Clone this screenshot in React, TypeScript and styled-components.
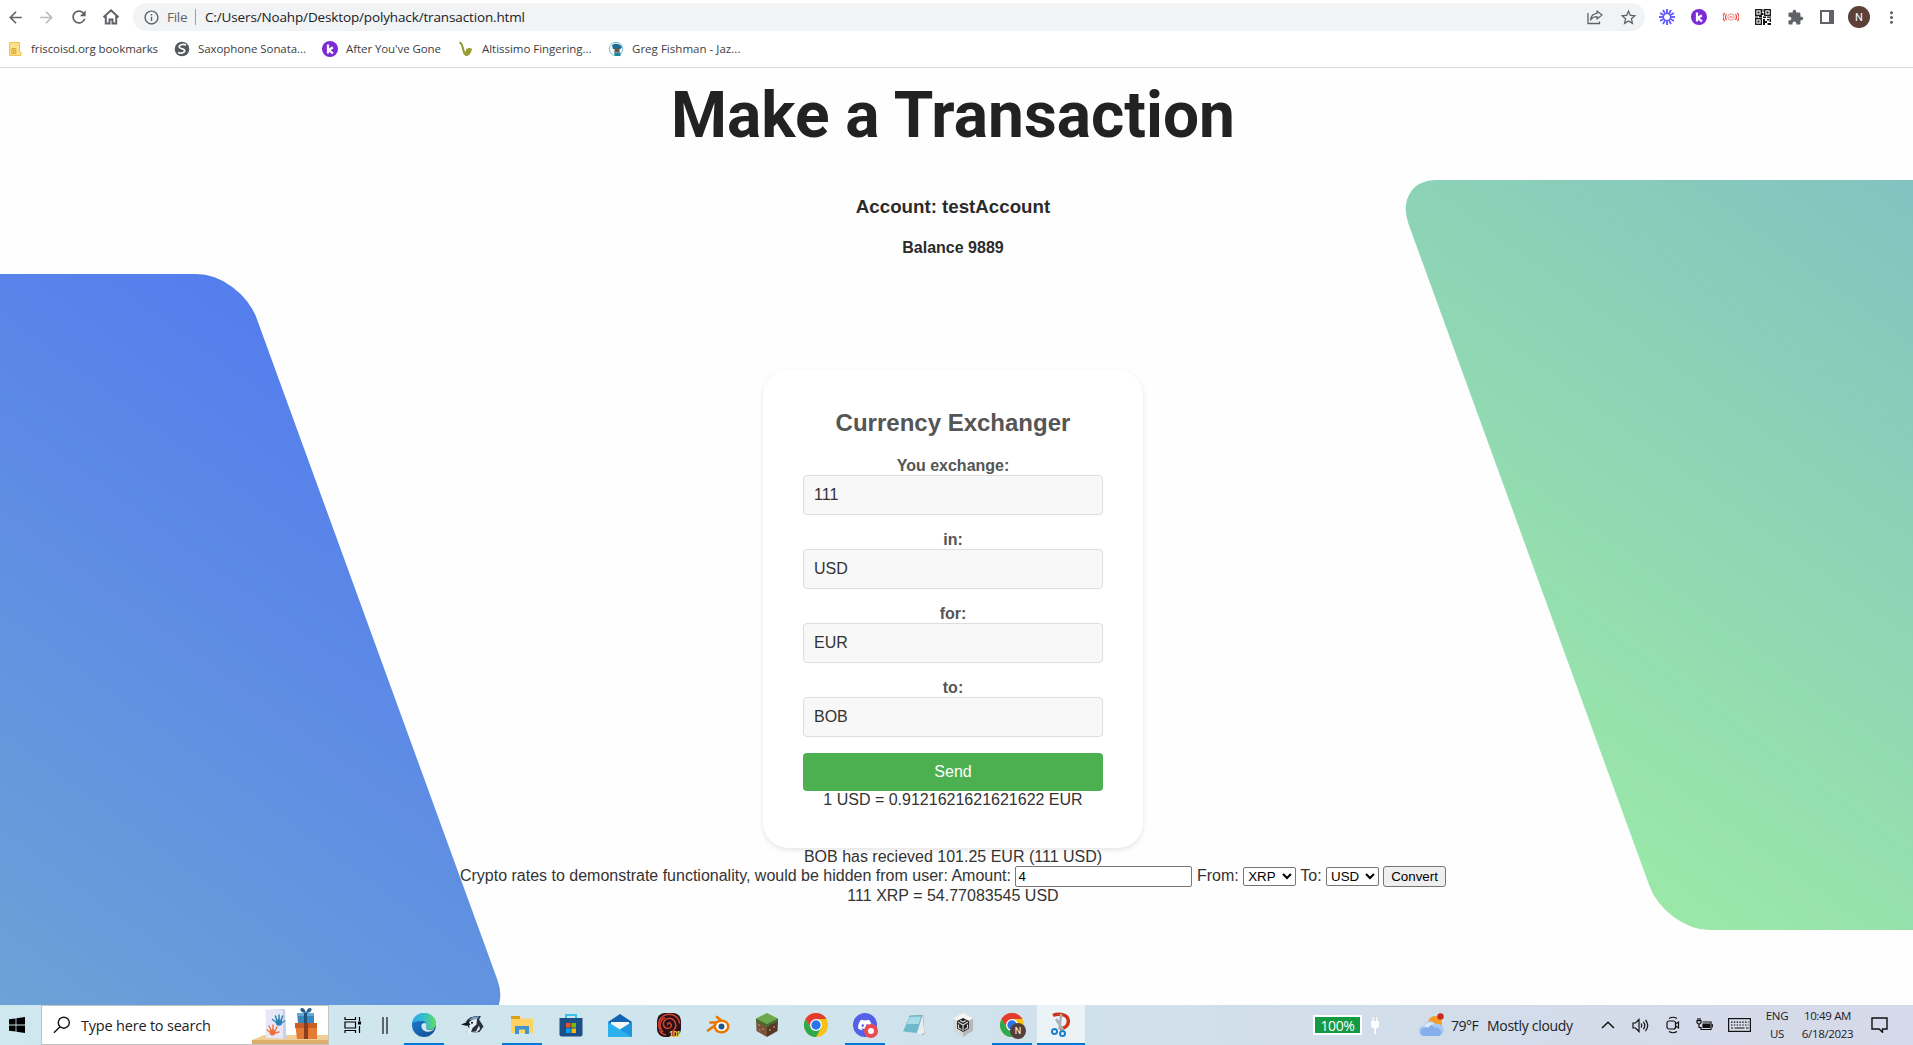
import React from 'react';
import styled, { createGlobalStyle } from 'styled-components';
import { MdArrowBack, MdArrowForward, MdRefresh, MdStarBorder, MdExtension, MdInfoOutline, MdMoreVert } from 'react-icons/md';
import { FaDiscord } from 'react-icons/fa';

const GlobalStyle = createGlobalStyle`
  * { box-sizing: border-box; }
  body { margin: 0; background: #fff; overflow: hidden; }
`;

const uiFont = '"Open Sans", "Noto Sans", sans-serif';
const pageFont = '"Liberation Sans", Arial, sans-serif';

const Screen = styled.div`
  display: flex;
  flex-direction: column;
  width: 1913px;
  height: 1045px;
  overflow: hidden;
  background: #fff;
`;

const BrowserBar = styled.header`
  flex: none;
  height: 68px;
  border-bottom: 1px solid #dadcde;
  font-family: ${uiFont};
`;

const Toolbar = styled.div`
  display: flex;
  align-items: center;
  height: 34px;
`;

const Slot = styled.span<{ $w: number; $color?: string }>`
  flex: none;
  width: ${p => p.$w}px;
  display: flex;
  align-items: center;
  justify-content: center;
  color: ${p => p.$color || '#5f6368'};
  svg { display: block; flex: none; }
`;

const AddressBar = styled.div`
  flex: none;
  display: flex;
  align-items: center;
  width: 1512px;
  height: 28px;
  margin-left: 6px;
  margin-right: 6px;
  border-radius: 14px;
  background: #f1f3f4;
  padding-left: 9px;
`;

const UiText = styled.span<{ $size: number; $w?: number; $ls?: number; $color?: string }>`
  flex: none;
  width: ${p => (p.$w ? p.$w + 'px' : 'auto')};
  font-family: ${uiFont};
  font-size: ${p => p.$size}px;
  letter-spacing: ${p => p.$ls || 0}px;
  color: ${p => p.$color || '#202124'};
  white-space: nowrap;
  line-height: 18px;
`;

const TaskText = styled(UiText)`
  padding-top: 2px;
`;

const Divider = styled.span`
  width: 1px;
  height: 16px;
  margin: 0 9px 0 7px;
  background: #9aa0a6;
`;

const Spacer = styled.span`
  flex: 1;
`;

const Avatar = styled.span`
  display: flex;
  align-items: center;
  justify-content: center;
  width: 22px;
  height: 22px;
  border-radius: 50%;
  background: #5d4037;
  color: #fff;
  font: 11px Roboto, sans-serif;
`;

const Bookmarks = styled.nav`
  display: flex;
  align-items: center;
  height: 30px;
  padding-left: 7px;
`;

const Bookmark = styled.span<{ $w: number }>`
  flex: none;
  display: flex;
  align-items: center;
  gap: 8px;
  width: ${p => p.$w}px;
`;

const Page = styled.main`
  position: relative;
  flex: none;
  height: 937px;
  overflow: hidden;
  padding-right: 7px;
  background: #fefefe;
  color: #333;
  font-family: ${pageFont};
  font-size: 16px;
  line-height: 18px;
  text-align: center;
`;

const Slab = styled.div<{ $left: number; $top: number }>`
  position: absolute;
  z-index: 0;
  left: ${p => p.$left}px;
  top: ${p => p.$top}px;
  width: 2870px;
  height: 750px;
  border-radius: 44px;
  transform: skewX(20deg);
  background: linear-gradient(45deg, #9be9a8, #547dee);
`;

const Content = styled.div`
  position: relative;
  z-index: 1;
  display: flex;
  flex-direction: column;
  align-items: center;
`;

const Title = styled.h1`
  margin: 10px 0 0;
  height: 75px;
  font: 700 64px/75px Roboto, sans-serif;
  color: #222;
`;

const Account = styled.h3`
  margin: 43px 0 0;
  font-size: 18.72px;
  line-height: 22px;
  color: #2b2b2b;
`;

const Balance = styled.h4`
  margin: 21px 0 0;
  font-size: 16px;
  line-height: 18px;
  color: #2b2b2b;
`;

const Card = styled.section`
  display: flex;
  flex-direction: column;
  width: 380px;
  height: 478px;
  margin-top: 113px;
  padding: 40px 40px 39px;
  border-radius: 25px;
  background: #fff;
  box-shadow: 0 2px 5px rgba(0, 0, 0, 0.1);
`;

const CardTitle = styled.h2`
  margin: 0 0 22px;
  font-size: 24px;
  line-height: 25px;
  color: #555;
`;

const FieldLabel = styled.label`
  flex: none;
  font-weight: bold;
  color: #555;
`;

const Field = styled.input`
  flex: none;
  width: 300px;
  height: 40px;
  margin: 0 0 16px;
  padding: 10px;
  border: 1px solid #ddd;
  border-radius: 4px;
  background: #f8f8f8;
  color: #333;
  font: 16px ${pageFont};
  outline: none;
`;

const SelectField = styled.select`
  flex: none;
  appearance: none;
  width: 300px;
  height: 40px;
  margin: 0 0 16px;
  padding: 9px 10px 10px;
  border: 1px solid #ddd;
  border-radius: 4px;
  background: #f8f8f8;
  color: #333;
  font: 16px ${pageFont};
`;

const Send = styled.button`
  flex: none;
  height: 38px;
  border: 0;
  border-radius: 4px;
  background: #4caf50;
  color: #fff;
  font: 16px ${pageFont};
`;

const Line = styled.div`
  flex: none;
  height: 18px;
  white-space: nowrap;
`;

const RatesRow = styled.div`
  display: flex;
  align-items: center;
  height: 21px;
  white-space: pre;
`;

const RateText = styled.span`
  padding-bottom: 2px;
`;

const AmountInput = styled.input`
  width: 177px;
  height: 21px;
  padding: 1px 2px;
  border: 1px solid #767676;
  border-radius: 2px;
  background: #fff;
  color: #000;
  font: 13.333px ${pageFont};
`;

const RateSelect = styled.select`
  width: 53px;
  height: 19px;
  border: 1px solid #767676;
  border-radius: 2px;
  background: #fff;
  color: #000;
  font: 13.333px ${pageFont};
`;

const Convert = styled.button`
  width: 63px;
  height: 21px;
  margin-left: 4px;
  padding: 0;
  border: 1px solid #767676;
  border-radius: 3px;
  background: #efefef;
  color: #000;
  font: 13.333px ${pageFont};
`;

const Taskbar = styled.footer`
  flex: none;
  display: flex;
  height: 40px;
  background: linear-gradient(90deg, #cfe7ee 0, #cfe5ed 38%, #d1e0eb 60%, #d3dcea 80%, #d6d9e9 100%);
  font-family: ${uiFont};
`;

const SearchBox = styled.div`
  flex: none;
  display: flex;
  align-items: center;
  width: 288px;
  height: 40px;
  border: 1px solid #c4c4c4;
  background: #fff;
  padding-left: 11px;
`;

const GiftArt = styled.svg`
  flex: none;
  display: block;
  margin-left: auto;
`;

const TaskApp = styled.span<{ $open?: boolean; $active?: boolean }>`
  flex: none;
  display: flex;
  justify-content: center;
  align-items: center;
  width: ${p => (p.$active ? 48 : 40)}px;
  margin: 0 ${p => (p.$active ? 0.5 : 4.5)}px;
  height: 40px;
  padding-top: 2px;
  border-bottom: 2px solid ${p => (p.$open || p.$active ? '#0078d7' : 'transparent')};
  background: ${p => (p.$active ? '#ecf3f7' : 'transparent')};
  svg { display: block; overflow: visible; }
`;

const Battery = styled.span`
  flex: none;
  display: flex;
  align-items: center;
  justify-content: center;
  width: 49px;
  height: 20px;
  border: 2px solid #fff;
  background: #139a43;
  color: #fff;
  font-size: 14px;
  letter-spacing: -0.4px;
`;

const TrayStack = styled.div<{ $w: number }>`
  flex: none;
  display: flex;
  flex-direction: column;
  justify-content: center;
  align-items: center;
  width: ${p => p.$w}px;
`;

const Tray = styled.div`
  display: flex;
  align-items: center;
  height: 40px;
`;

const HomeIcon = () => (
  <svg width="18" height="18" viewBox="0 0 18 18" fill="none" stroke="#5f6368" strokeWidth="2">
    <path d="M3.8 8v7.5h3.7v-4h3v4h3.700V8M1.500 9.300 9 2.300l7.500 7" />
  </svg>
);

const ShareIcon = () => (
  <svg width="16" height="16" viewBox="0 0 16 16" fill="none" stroke="#5f6368" strokeWidth="1.300">
    <path d="M1 4v10.500h11.500v-2" />
    <path d="M10 2l5 4-5 4V7.700C7 7.700 5 8.700 3.500 11 4 7 6.500 4.600 10 4.300z" strokeLinejoin="round" />
  </svg>
);

const Burst = () => (
  <svg width="16" height="16" viewBox="-8 -8 16 16" stroke="#635bff" strokeWidth="1.900">
    {[0, 30, 60, 90, 120, 150, 180, 210, 240, 270, 300, 330].map(a => (
      <line key={a} x1="0" y1="-3.600" x2="0" y2="-8" transform={`rotate(${a})`} />
    ))}
    <circle r="3.600" fill="none" strokeWidth="1.300" />
  </svg>
);

const KIcon = () => (
  <svg width="16" height="16" viewBox="0 0 16 16">
    <circle cx="8" cy="8" r="8" fill="#7b2bd6" />
    <path d="M6 3.500v9M10.800 6.300 7 9l4 3.500" stroke="#fff" strokeWidth="2.300" fill="none" />
  </svg>
);

const Signal = () => (
  <svg width="16" height="12" viewBox="0 0 16 12" fill="none" stroke="#f0473f" strokeWidth="1.200">
    <circle cx="8" cy="6" r="3.200" strokeWidth=".6" />
    <path d="M6.500 6h3M3.600 3a5 5 0 0 0 0 6M12.400 3a5 5 0 0 1 0 6M1.700 2a6 6 0 0 0 0 8M14.300 2a6 6 0 0 1 0 8" />
  </svg>
);

const Qr = () => (
  <svg width="16" height="16" viewBox="0 0 16 16">
    <rect width="16" height="16" fill="#fff" />
    <g fill="none" stroke="#111" strokeWidth="1.300">
      <rect x=".7" y=".7" width="5.600" height="5.600" />
      <rect x="9.700" y=".7" width="5.600" height="5.600" />
      <rect x=".7" y="9.700" width="5.600" height="5.600" />
    </g>
    <path fill="#111" d="M2.500 2.500h2v2h-2zM11.500 2.500h2v2h-2zM2.500 11.500h2v2h-2zM7.500 0h1v3h-1zM7 4h1.500v2H7zM0 7.500h3v1H0zM4 7h3v1.500H4zM8 7.500h3V9H8zM12 7.500h4v1.200h-4zM8 10h2v2h2v2h-2v2H8zM12 10h2v1.500h-2zM14.500 9.500H16V13h-1.500zM12.500 14H16v2h-3.500z" />
  </svg>
);

const Panel = () => (
  <svg width="14" height="14" viewBox="0 0 14 14">
    <rect width="14" height="14" fill="#5f6368" />
    <rect x="2" y="2" width="7" height="10" fill="#fff" />
  </svg>
);

const FolderMark = () => (
  <svg width="16" height="16" viewBox="0 0 16 16">
    <path d="M2.500 1.500h10v9l1.500 1v3H2.500z" fill="#ffe08a" stroke="#ecc24b" />
    <path d="M4.800 7.500h4v5h-4zM6.800 7.500v5M4.800 10h4" fill="none" stroke="#d8a92f" />
  </svg>
);

const SMark = () => (
  <svg width="16" height="16" viewBox="0 0 16 16">
    <circle cx="8" cy="8" r="7.300" fill="#55595c" />
    <path d="M12 4C9 2.500 4.500 4 5.300 6.300 6 8 11 7.600 10.700 9.900 10.300 12 7 12.800 4 11.500" fill="none" stroke="#fff" strokeWidth="1.700" />
  </svg>
);

const SaxMark = () => (
  <svg width="16" height="16" viewBox="0 0 16 16" fill="none">
    <path d="M1.500 1.500C5 2 4.500 8 6.500 12.500c2 3 4-.5 5-5.500" stroke="#8d9a2b" strokeWidth="2" />
    <path d="M5.500 9.500 7 12l1.500-4.500h5.500C13.500 12 11 15.500 7.500 15z" fill="#9c9c33" />
  </svg>
);

const FishMark = () => (
  <svg width="16" height="16" viewBox="0 0 16 16">
    <circle cx="8" cy="8" r="6.800" fill="#eef8fb" stroke="#7cbfd5" />
    <path d="M4 4.500c2-3 8-2 10 1.500l-1.500 2H5z" fill="#1d6d92" />
    <path d="M6.500 7.500h5v4h-5z" fill="#705544" />
    <path d="M6 11.500h6.500V15H7z" fill="#16899d" />
  </svg>
);

const WindowsLogo = () => (
  <svg width="16" height="16" viewBox="0 0 16 16" fill="#000">
    <path d="M0 2.300l6.600-.9v6.200H0zM7.400 1.300 16 0v7.600H7.400zM0 8.400h6.600v6.200L0 13.700zM7.400 8.400H16V16l-8.600-1.200z" />
  </svg>
);

const Magnifier = () => (
  <svg width="18" height="18" viewBox="0 0 18 18" fill="none" stroke="#111" strokeWidth="1.400">
    <circle cx="10.800" cy="6.700" r="5.500" />
    <path d="M7 10.700.9 16.800" />
  </svg>
);

const TaskView = () => (
  <svg width="18" height="16" viewBox="0 0 18 16" fill="none" stroke="#000" strokeWidth="1.200">
    <path d="M1 0v2.500h10.500V0M1 16v-2.500h10.500V16M1 5h10.500v6H1zM15.500 0v4M15.500 9v7" />
    <path d="M14 4.500h3v3h-3z" fill="#000" stroke="none" />
  </svg>
);

const Edge = () => (
  <svg width="24" height="24" viewBox="0 0 24 24">
    <defs>
      <linearGradient id="edgeTop" x1="0" x2="1"><stop stopColor="#2aa9ea" /><stop offset=".55" stopColor="#35c1c8" /><stop offset="1" stopColor="#66dd58" /></linearGradient>
      <linearGradient id="edgeLow" x1="0" y1="0" x2="1" y2="1"><stop stopColor="#1d83da" /><stop offset="1" stopColor="#114a8b" /></linearGradient>
    </defs>
    <circle cx="12" cy="12" r="12" fill="url(#edgeLow)" />
    <path d="M.2 10.500C1 4 6 0 12 0c7 0 12 5 12 10.500 0 4-3 6-6.500 6-2.500 0-4-1-3.500-2 2-3-.500-6.500-4.500-6.500C5 8 1 9 .2 10.500z" fill="url(#edgeTop)" />
    <path d="M9.300 13c.2-2 1.400-3 3-3 1.700 0 3 2 1.700 4.500-.5 1 1 2.500 4 2.500 2 0 3.500-.700 4.800-1.700-2 4.500-12.500 5.700-13.500-2.300z" fill="#d2e6ef" />
  </svg>
);

const Bird = () => (
  <svg width="24" height="22" viewBox="0 0 24 22">
    <path d="M5 7.500C8 3 13 1.500 20 2l-2 3.500 4.500 7-4 5.500-8 1-5-1 3-3-2.500-4z" fill="#26323f" />
    <path d="M7.500 9c2.500-3.500 5.500-4.500 8.500-4l-.5 5.500-4 3.500-1.500 4 5-.5 3-6 1 3.500-3 3-9 1.500-1-2 2.500-4z" fill="#e7f0f6" />
    <path d="M8 6c2.500-3 6-4 10.500-3.500L16 5z" fill="#7ba6cd" />
    <path d="M0 10.500 7.500 7.500l2 3.500-4.500.8z" fill="#15191d" />
    <circle cx="11" cy="8.700" r="1" fill="#000" />
  </svg>
);

const Explorer = () => (
  <svg width="22" height="20" viewBox="0 0 22 20">
    <path d="M0 1.500h9l2 2h11V18H0z" fill="#ffd264" />
    <path d="M0 1h9v3H0z" fill="#dda01e" />
    <path d="M4 11h14v8h-4v-4.500H8V19H4z" fill="#3f95d2" />
  </svg>
);

const Store = () => (
  <svg width="24" height="24" viewBox="0 0 24 24">
    <path d="M7 6V2h10v4" fill="none" stroke="#37c3f0" strokeWidth="2" />
    <path d="M.5 5h23v16.500q0 2-2 2h-19q-2 0-2-2z" fill="#1c4f86" />
    <path d="M7 10h4.500v4.500H7z" fill="#f25022" /><path d="M12.500 10H17v4.500h-4.500z" fill="#7fba00" />
    <path d="M7 15.500h4.500V20H7z" fill="#00a4ef" /><path d="M12.500 15.500H17V20h-4.500z" fill="#ffb900" />
  </svg>
);

const Mail = () => (
  <svg width="24" height="23" viewBox="0 0 24 23">
    <path d="M0 8 12 0l12 8v8H0z" fill="#1164b4" />
    <path d="M3 8h18v8H3z" fill="#f5f7f8" />
    <path d="M0 8l12 7.500L24 8v15H0z" fill="#2ab1ee" />
    <path d="M12 15.500 24 8v15z" fill="#2094dc" />
  </svg>
);

const Spiral = () => (
  <svg width="24" height="24" viewBox="0 0 24 24">
    <rect width="24" height="24" rx="8" fill="#2a1018" />
    <g fill="none" stroke="#d8432c" strokeWidth="1.500">
      <path d="M11 12c-1-1.500 1-3 2.500-1.500 2 2 0 5-2.500 5-4 0-5.500-4-4-7 2-4 7.500-4 10-1 3.500 4 1.500 10-3 11.500M3 17C-.5 10 3 3 10 1.500c7-1 12 3 12.500 9" />
      <path d="M6 19c-5-5-3-12 2-14.500M9 22c-3-.5-5-2-6.500-4" />
    </g>
    <text x="12" y="23.500" fontFamily="Liberation Sans" fontWeight="700" fontSize="8.500" textLength="12" fill="#f0d050">101</text>
  </svg>
);

const Blender = () => (
  <svg width="24" height="20" viewBox="0 0 24 20">
    <path d="M2 15.500 13 7.500H4.500M11 2l7 6" fill="none" stroke="#ea7600" strokeWidth="2.600" strokeLinecap="round" strokeLinejoin="round" />
    <ellipse cx="15.500" cy="11.500" rx="8" ry="7" fill="#ea7600" />
    <ellipse cx="15.500" cy="11.500" rx="5.500" ry="4.600" fill="#fff" />
    <circle cx="15.500" cy="11.500" r="3" fill="#235785" />
  </svg>
);

const Grass = () => (
  <svg width="24" height="24" viewBox="0 0 24 24">
    <path d="M1 5.500 12 11v13L1.500 18z" fill="#7a5238" />
    <path d="M23 5.500 12 11v13l10.500-6z" fill="#553725" />
    <path d="M12 0 23 5.500 12 11 1 5.500z" fill="#6da84b" />
    <path d="M1 5.500 12 11v3l-2-.5v-1.500l-3 0V10.500L4 10 1 8zM23 5.500 12 11v3l3-1v-1.500l4-1 4-2.500z" fill="#42702c" />
    <path d="M3 11h2v2H3zM7 15h2v2H7zM4 16h1.500v2H4zM14 16h2v2h-2zM18 13h2v2h-2z" fill="#9a7455" />
  </svg>
);

const Chrome = ({ badge }: { badge?: boolean }) => (
  <svg width="24" height="24" viewBox="0 0 24 24">
    <circle cx="12" cy="12" r="12" fill="#fbc116" />
    <path d="M1.600 6A12 12 0 0 1 22.400 6H12v6L6.800 15z" fill="#e33b2e" />
    <path d="M1.600 6A12 12 0 0 0 12 24l5.200-9H6.800z" fill="#2da94f" />
    <circle cx="12" cy="12" r="6" fill="#fff" />
    <circle cx="12" cy="12" r="4.700" fill="#2a75e8" />
    {badge && (
      <g>
        <circle cx="18" cy="18" r="8" fill="#53403c" />
        <text x="18" y="21.200" textAnchor="middle" fontFamily="Roboto" fontSize="9" fill="#fff">N</text>
      </g>
    )}
  </svg>
);

const Discord = () => (
  <svg width="24" height="24" viewBox="0 0 24 24">
    <circle cx="12" cy="12" r="12" fill="#5460e8" />
    <FaDiscord x="4.500" y="4.500" size={15} color="#fff" />
    <circle cx="18" cy="18" r="7" fill="#ea4a50" />
    <circle cx="18" cy="18" r="3" fill="#fff" />
  </svg>
);

const Notepad = () => (
  <svg width="24" height="22" viewBox="0 0 24 22">
    <path d="M7 2 21 1l1.500 19-4 1z" fill="#8f8d78" />
    <path d="M8 1.500 20.500 1 15 19 1 17.500z" fill="#6fb9cc" />
    <path d="M8 3 19 2.500 16.500 10 5 10z" fill="#a8dbe4" />
    <path d="M15 19 20.500 1l2 18-4 2z" fill="#e7eef0" />
  </svg>
);

const Unity = () => (
  <svg width="22" height="24" viewBox="0 0 22 24">
    <path d="M11 0 21 5.500v12L11 24 1 17.500v-12z" fill="#d5d7d8" />
    <path d="M11 0 21 5.500 11 11 1 5.500z" fill="#f4f5f5" /><path d="M21 5.500v12L11 24V11z" fill="#b5b8ba" />
    <path d="M11 5 17 8v7.500L11 19l-6-3.500V8z" fill="#222" />
    <path d="M11 12v6M11 12l5-3M11 12 6 9M8 7.500l3 1.500 3-1.500M6.500 11.500V15l3 1.500M15.500 11.500V15l-3 1.500" stroke="#d9d9d9" strokeWidth="1.200" fill="none" />
  </svg>
);

const Snip = () => (
  <svg width="22" height="24" viewBox="0 0 22 24" fill="none">
    <path d="M3 2.500c4-2 13-2 15 3.500 1.500 6-3 10-8 9" stroke="#cd3415" strokeWidth="3.400" />
    <path d="M11 1 9.500 16M6 6l7 11" stroke="#a9b1b8" strokeWidth="2.500" />
    <circle cx="4.500" cy="18.500" r="2.500" stroke="#1a80cd" strokeWidth="2" />
    <circle cx="12.500" cy="20.500" r="2.500" stroke="#1a80cd" strokeWidth="2" />
  </svg>
);

const Plug = () => (
  <svg width="10" height="17" viewBox="0 0 10 17">
    <path d="M1 4h8v4q0 3-3 3.500V17H4.500v-5.500Q1 11 1 8zM2.500 0h1.300v4H2.500zM6.200 0h1.300v4H6.200z" fill="#fff" />
  </svg>
);

const Weather = () => (
  <svg width="26" height="24" viewBox="0 0 26 24">
    <circle cx="16" cy="10" r="7" fill="#f59a23" />
    <circle cx="21.500" cy="3.500" r="3.200" fill="#c42b1c" />
    <path d="M5 23a5 5 0 0 1-.3-10A7 7 0 0 1 17 11a6 6 0 0 1 3 12z" fill="#a9c9f4" />
    <path d="M5 23a4 4 0 0 1 1-8 6 6 0 0 1 10 0 4.500 4.500 0 0 1 4 8z" fill="#86aeea" />
    <path d="M5 13.500a6.500 6.500 0 0 1 10.500-2.500c-5 0-6 4-6 4s-2-1.500-4.500-1.500z" fill="#dbeafd" />
  </svg>
);

const Gifts = () => (
  <GiftArt width="76" height="38" viewBox="0 0 76 38">
    <path d="M12 29h64v9H0v-4z" fill="#f1cf94" /><path d="M0 34h76v4H0z" fill="#dcae6c" />
    <path d="M15 4 33 3l1.500 30-20-1z" fill="#c9d2ec" /><path d="M13.500 3.500 31 4.500v28l-17-.5z" fill="#e6e8f8" />
    <path d="M24.500 16.500l-4-3M25 15l-1.500-5M27 15V9M29 15l1.500-5M29.500 17l3-2" stroke="#2b83b5" strokeWidth="1.500" strokeLinecap="round" />
    <circle cx="27" cy="16.500" r="3.200" fill="#2b83b5" />
    <path d="M18 26l-3-2M19 24l-2-4M21 24v-5M23 25l2-4M23 27l4-1" stroke="#ee7038" strokeWidth="1.400" strokeLinecap="round" />
    <circle cx="20.500" cy="26.500" r="2.900" fill="#ee7038" />
    <path d="M43 17h22v16H45z" fill="#e57a35" /><path d="M43 17h22v5H43z" fill="#c95f24" /><path d="M52 17h4v16h-4z" fill="#8c3e20" />
    <path d="M45 7h17v10H46z" fill="#3b87bd" /><path d="M45 7h17v3H45z" fill="#62a9d5" /><path d="M52 7h3v10h-3z" fill="#1c537f" />
    <path d="M54 7c-6 0-7-5-4-5s4 5 4 5 1-5 4-5 2 5-4 5z" fill="#245f92" />
  </GiftArt>
);

const strokes = { fill: 'none', stroke: '#111', strokeWidth: 1.2 };

const ChevronUp = () => <svg width="14" height="8" viewBox="0 0 14 8" {...strokes} strokeWidth={1.5}><path d="M1 7l6-5.700L13 7" /></svg>;
const Speaker = () => (
  <svg width="17" height="15" viewBox="0 0 17 15" {...strokes}>
    <path d="M1 5h2.500L7 1.500v12L3.500 10H1zM9 5.500q1.500 2 0 4M11.300 3.800q3 3.700 0 7.400M13.500 2q4.500 5.500 0 11" />
  </svg>
);
const Camera = () => (
  <svg width="14" height="18" viewBox="0 0 14 18" {...strokes}>
    <rect x="1" y="5" width="8.500" height="8" rx="2" /><path d="M9.500 8 12.500 6v6l-3-2M3 2.500q4-2.500 8 0M3 15.500q4 2.500 8 0" />
  </svg>
);
const BatteryPlug = () => (
  <svg width="17" height="14" viewBox="0 0 17 14" {...strokes}>
    <path d="M6.500 4H15v7.500H5V9" /><path d="M7 6h6.500v3.500H7z" fill="#111" /><path d="M16.300 6v3.500M2 0v2.500M4 0v2.500M1 2.700h4v2L3.500 6h-1L1 4.700zM3 6v3.500h2" />
  </svg>
);
const Keyboard = () => (
  <svg width="23" height="14" viewBox="0 0 23 14" {...strokes}>
    <rect x=".6" y=".6" width="21.800" height="12.800" /><path d="M3 4.200h17.500M3 7h17.500" strokeDasharray="1.500 1.300" /><path d="M3 10h2M6.500 10h10M18 10h2.500" />
  </svg>
);
const Notify = () => (
  <svg width="17" height="16" viewBox="0 0 17 16" {...strokes} strokeWidth={1.400}><path d="M1 1h15v11h-4.500v3.200L8 12H1z" /></svg>
);

const bookmarks = [
  { icon: <FolderMark />, label: 'friscoisd.org bookmarks', w: 167, ls: -0.08 },
  { icon: <SMark />, label: 'Saxophone Sonata...', w: 148, ls: -0.08 },
  { icon: <KIcon />, label: "After You've Gone", w: 136, ls: -0.08 },
  { icon: <SaxMark />, label: 'Altissimo Fingering...', w: 150, ls: -0.03 },
  { icon: <FishMark />, label: 'Greg Fishman - Jaz...', w: 160, ls: 0.03 },
];

const apps = [
  { icon: <Edge />, open: true }, { icon: <Bird /> }, { icon: <Explorer />, open: true }, { icon: <Store /> },
  { icon: <Mail /> }, { icon: <Spiral /> }, { icon: <Blender /> }, { icon: <Grass /> }, { icon: <Chrome /> },
  { icon: <Discord />, open: true }, { icon: <Notepad /> }, { icon: <Unity /> }, { icon: <Chrome badge />, open: true },
  { icon: <Snip />, active: true },
];

export default function App() {
  return (
    <Screen>
      <GlobalStyle />
      <BrowserBar>
        <Toolbar>
          <Slot $w={30}><MdArrowBack size={19} /></Slot>
          <Slot $w={33} $color="#b9bbbe"><MdArrowForward size={19} /></Slot>
          <Slot $w={32}><MdRefresh size={20} /></Slot>
          <Slot $w={32}><HomeIcon /></Slot>
          <AddressBar>
            <Slot $w={18}><MdInfoOutline size={17} /></Slot>
            <Slot $w={7} />
            <UiText $size={13.5} $w={21} $ls={-0.3} $color="#5f6368">File</UiText>
            <Divider />
            <UiText $size={13.5} $ls={-0.14}>C:/Users/Noahp/Desktop/polyhack/transaction.html</UiText>
            <Spacer />
            <Slot $w={32}><ShareIcon /></Slot>
            <Slot $w={34}><MdStarBorder size={19} /></Slot>
          </AddressBar>
          <Slot $w={32}><Burst /></Slot>
          <Slot $w={32}><KIcon /></Slot>
          <Slot $w={32}><Signal /></Slot>
          <Slot $w={32}><Qr /></Slot>
          <Slot $w={32}><MdExtension size={17} /></Slot>
          <Slot $w={32}><Panel /></Slot>
          <Slot $w={32}><Avatar>N</Avatar></Slot>
          <Slot $w={32}><MdMoreVert size={19} /></Slot>
        </Toolbar>
        <Bookmarks>
          {bookmarks.map(b => (
            <Bookmark key={b.label} $w={b.w}>
              {b.icon}
              <UiText $size={11.5} $ls={b.ls} $color="#3c4043">{b.label}</UiText>
            </Bookmark>
          ))}
        </Bookmarks>
      </BrowserBar>

      <Page>
        <Slab $left={-2493} $top={206} />
        <Slab $left={1529} $top={112} />
        <Content>
          <Title>Make a Transaction</Title>
          <Account>Account: testAccount</Account>
          <Balance>Balance 9889</Balance>
          <Card>
            <CardTitle>Currency Exchanger</CardTitle>
            <FieldLabel>You exchange:</FieldLabel>
            <Field defaultValue="111" />
            <FieldLabel>in:</FieldLabel>
            <SelectField><option>USD</option></SelectField>
            <FieldLabel>for:</FieldLabel>
            <SelectField><option>EUR</option></SelectField>
            <FieldLabel>to:</FieldLabel>
            <Field defaultValue="BOB" />
            <Send>Send</Send>
            <Line>1 USD = 0.9121621621621622 EUR</Line>
          </Card>
          <Line>BOB has recieved 101.25 EUR (111 USD)</Line>
          <RatesRow>
            <RateText>Crypto rates to demonstrate functionality, would be hidden from user: Amount: </RateText>
            <AmountInput defaultValue="4" />
            <RateText> From: </RateText>
            <RateSelect><option>XRP</option></RateSelect>
            <RateText> To: </RateText>
            <RateSelect><option>USD</option></RateSelect>
            <Convert>Convert</Convert>
          </RatesRow>
          <Line>111 XRP = 54.77083545 USD</Line>
        </Content>
      </Page>

      <Taskbar>
        <Slot $w={34}><WindowsLogo /></Slot>
        <Slot $w={7} />
        <SearchBox>
          <Magnifier />
          <Slot $w={10} />
          <TaskText $size={14.5} $ls={-0.2}>Type here to search</TaskText>
          <Gifts />
        </SearchBox>
        <Slot $w={48}><TaskView /></Slot>
        <Slot $w={16} $color="#111">
          <svg width="6" height="17" viewBox="0 0 6 17" stroke="#111" strokeWidth="1.200"><path d="M1 0v17M5 0v17" /></svg>
        </Slot>
        <Slot $w={6.5} />
        {apps.map((a, i) => (
          <TaskApp key={i} $open={a.open} $active={a.active}>{a.icon}</TaskApp>
        ))}
        <Spacer />
        <Tray>
          <Battery>100%</Battery>
          <Slot $w={26}><Plug /></Slot>
          <Slot $w={30} />
          <Slot $w={28}><Weather /></Slot>
          <Slot $w={5} />
          <TaskText $size={14} $w={36} $ls={-0.5}>79°F</TaskText>
          <TaskText $size={14} $w={106} $ls={-0.3}>Mostly cloudy</TaskText>
          <Slot $w={30}><ChevronUp /></Slot>
          <Slot $w={34}><Speaker /></Slot>
          <Slot $w={32}><Camera /></Slot>
          <Slot $w={31}><BatteryPlug /></Slot>
          <Slot $w={39}><Keyboard /></Slot>
          <TrayStack $w={36}>
            <UiText $size={11.5} $ls={-0.3}>ENG</UiText>
            <UiText $size={11.5} $ls={-0.3}>US</UiText>
          </TrayStack>
          <TrayStack $w={65}>
            <UiText $size={11.5} $ls={-0.35}>10:49 AM</UiText>
            <UiText $size={11.5} $ls={-0.35}>6/18/2023</UiText>
          </TrayStack>
          <Slot $w={39}><Notify /></Slot>
          <Slot $w={14} />
        </Tray>
      </Taskbar>
    </Screen>
  );
}
